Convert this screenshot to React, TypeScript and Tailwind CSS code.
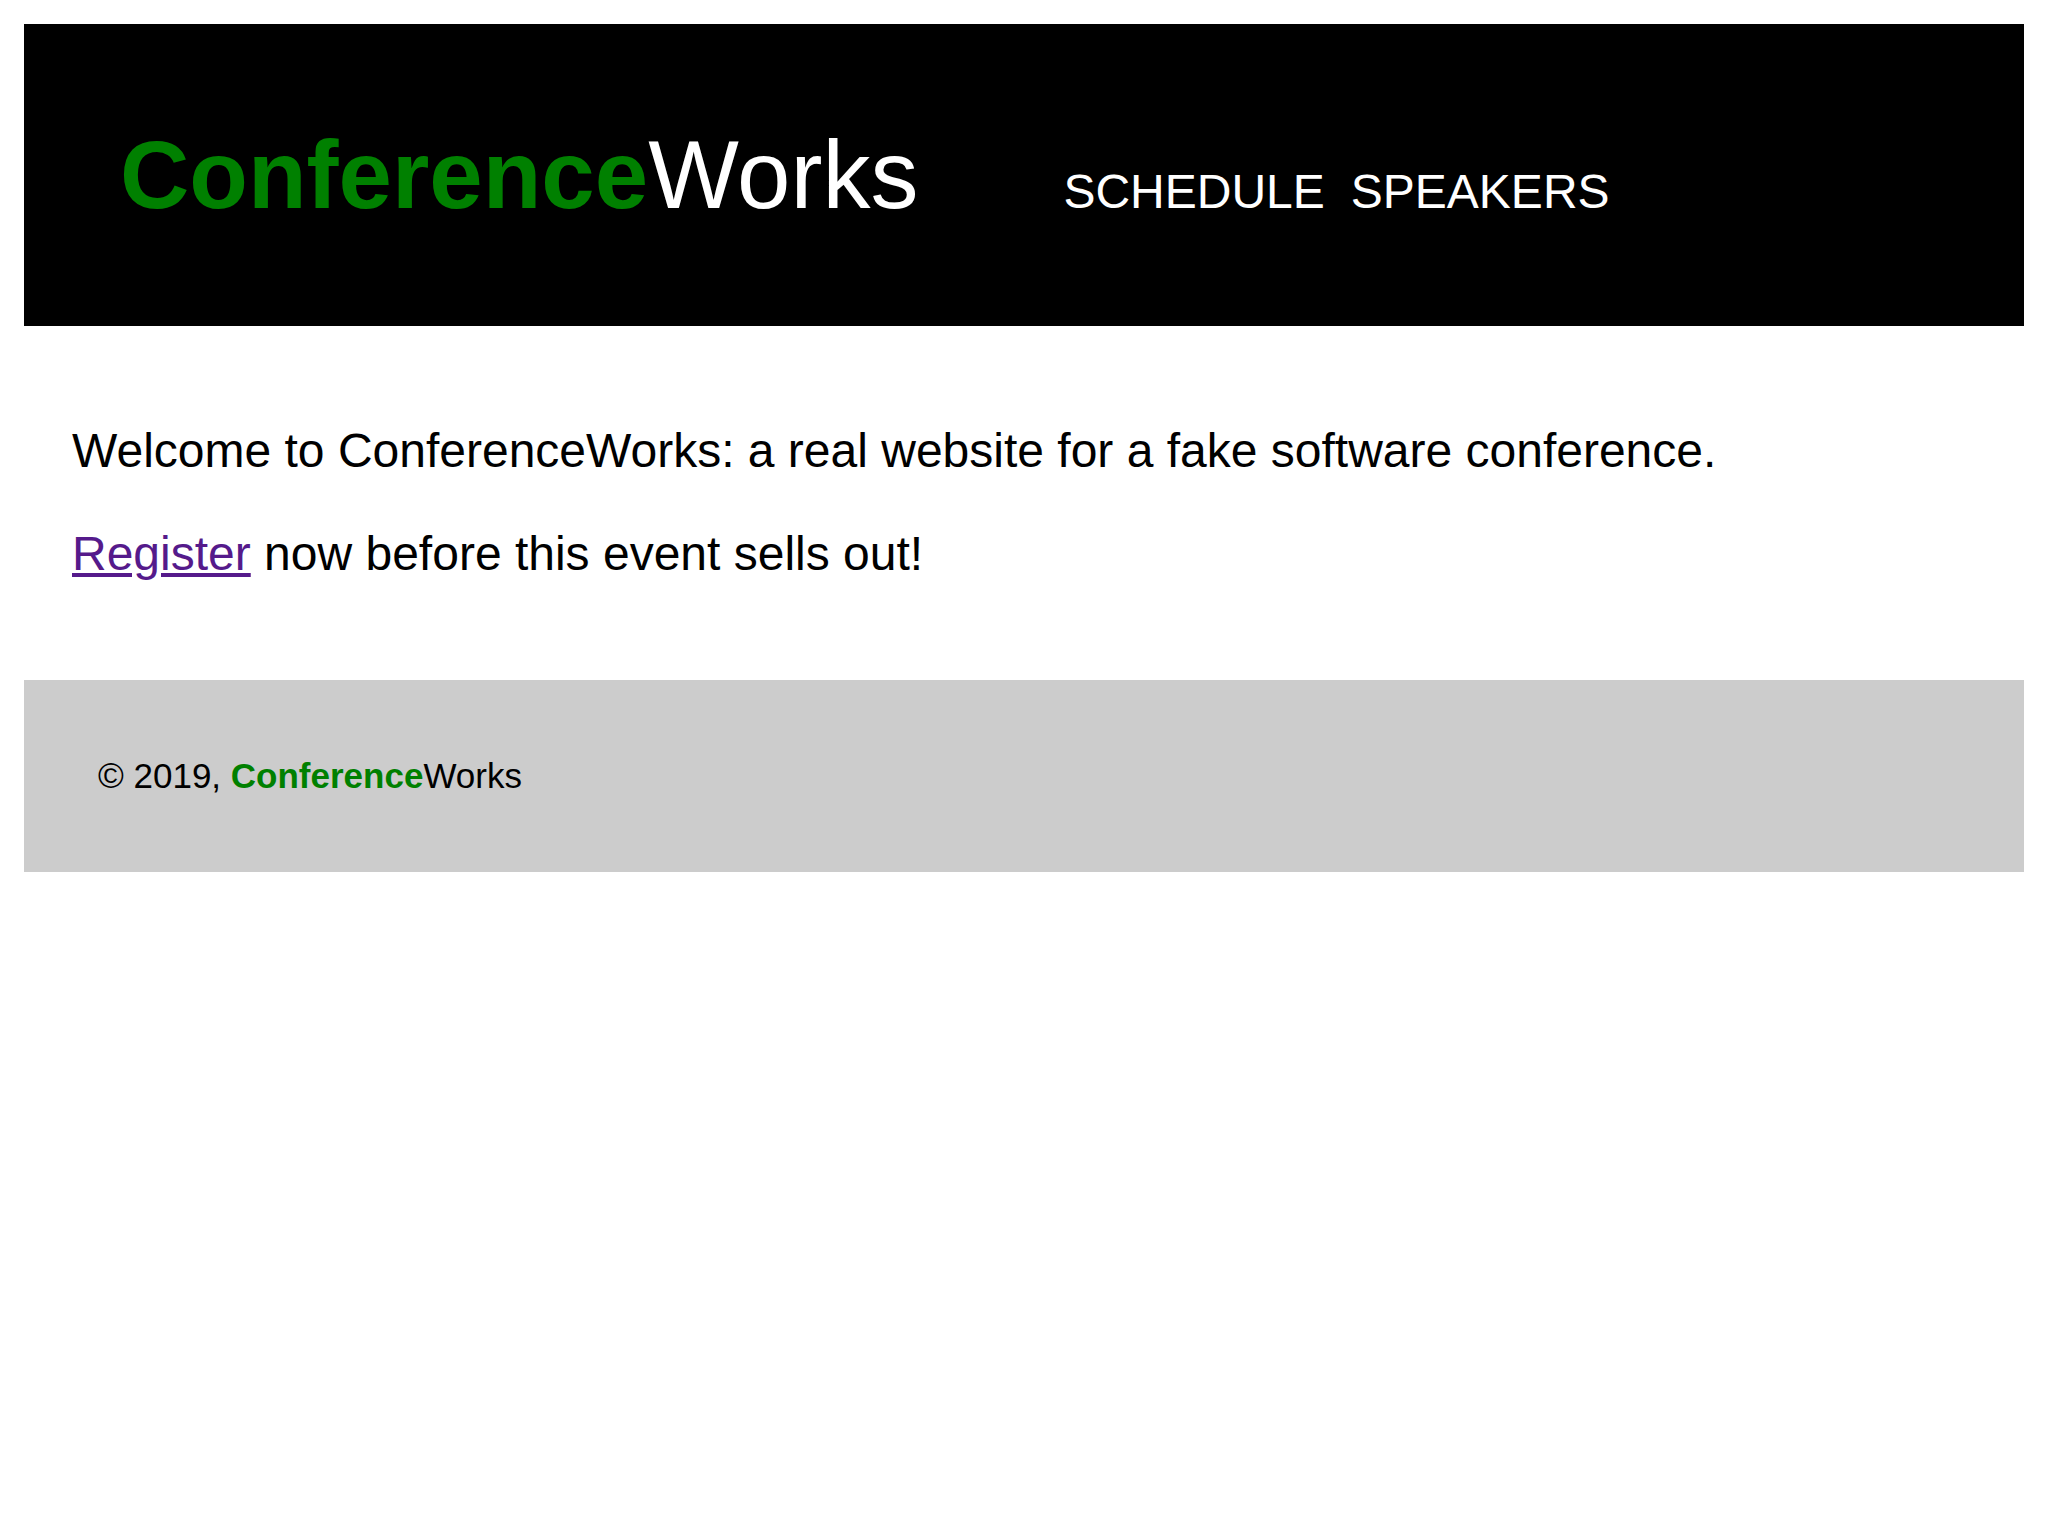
// App.tsx
const Brand = ({ className = "" }: { className?: string }) => (
  <span className={className}>
    <span className="font-bold text-[#008000]">Conference</span>
    <span>Works</span>
  </span>
);

export default function App() {
  return (
    <div className="min-h-screen bg-white p-6 font-['Liberation_Sans',Arial,sans-serif] leading-[normal] text-black">
      {/* header */}
      <header className="flex items-baseline gap-[145px] bg-black p-24 text-white">
        <Brand className="text-[96px] leading-[normal]" />
        <nav className="flex gap-[26px] text-[48px] leading-[normal]">
          <a href="#schedule">SCHEDULE</a>
          <a href="#speakers">SPEAKERS</a>
        </nav>
      </header>

      {/* content */}
      <main className="px-12 pt-[49px] pb-[51px] text-[48px] leading-[normal]">
        <p className="my-12">
          Welcome to ConferenceWorks: a real website for a fake software
          conference.
        </p>
        <p className="my-12">
          <a href="#register" className="text-[#551a8b] underline">
            Register
          </a>{" "}
          now before this event sells out!
        </p>
      </main>

      {/* footer */}
      <footer className="bg-[#cccccc] py-[76px] pl-[74px] text-[35px] leading-[normal]">
        © 2019, <Brand />
      </footer>
    </div>
  );
}
